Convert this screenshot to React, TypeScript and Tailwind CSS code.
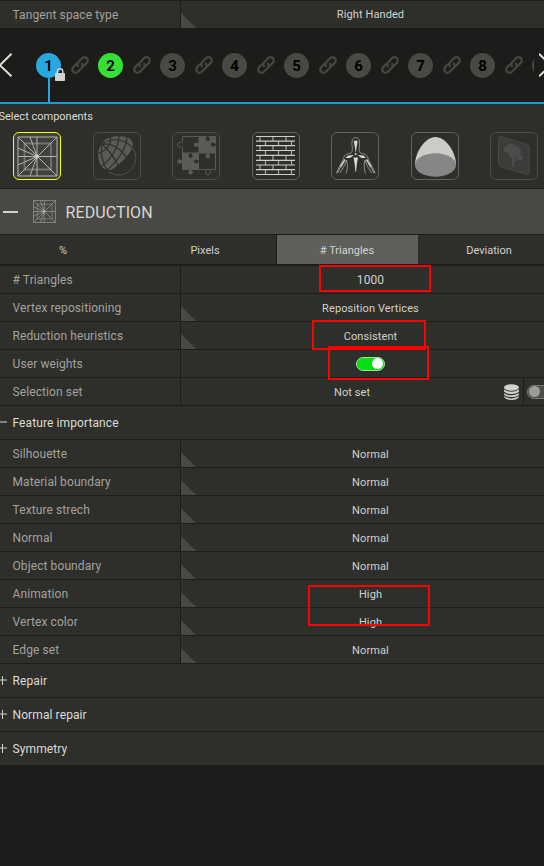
import React from "react";

const LABEL = "text-[12px] tracking-[0.1px]";
const VALUE = "text-[11px] tracking-[0.1px] text-[#d2d2ce]";

function Corner() {
  return (
    <svg className="block h-[15px] w-[15px] self-end" viewBox="0 0 15 15">
      <path d="M0 0 15 15H0Z" fill="#484944" />
    </svg>
  );
}

function Row({ label, menu = true, children }: { label: string; menu?: boolean; children: React.ReactNode }) {
  return (
    <div className="flex h-7 w-[560px] border-b border-[#1d1d1b]">
      <div className={`w-[181px] shrink-0 border-r border-[#1d1d1b] pl-[12.5px] leading-[29px] text-[#a3a39e] ${LABEL}`}>
        {label}
      </div>
      <div className="grid flex-1 grid-cols-1 grid-rows-[27px]">
        <div className="col-start-1 row-start-1 flex">{menu && <Corner />}</div>
        <div className={`col-start-1 row-start-1 flex items-center justify-center ${VALUE}`}>{children}</div>
      </div>
    </div>
  );
}

function Text({ children }: { children: React.ReactNode }) {
  return <span className="pt-[3px] leading-4">{children}</span>;
}

function Section({ label, open = false }: { label: string; open?: boolean }) {
  return (
    <div className="flex h-[34px] items-center border-b border-[#1d1d1b] text-[#dcdcd8]">
      <svg className="h-[11px] w-[12.5px] shrink-0" viewBox="0 0 12.5 11">
        <path d={open ? "M0 5H7" : "M0 5H7M2.5 1V10"} stroke="#d2d2ce" strokeWidth="1" />
      </svg>
      <span className={LABEL}>{label}</span>
    </div>
  );
}

function MeshIcon({ className, thin = 1, line = "#b4b4af" }: { className: string; thin?: number; line?: string }) {
  return (
    <svg className={className} viewBox="4 3 41 41" fill="none">
      <path d="M11.5 10.5H38V36.5H11.5Z" stroke="#73746f" strokeWidth="1.8" />
      <path
        d="M5 4H44V43H5ZM5 4 44 43M44 4 5 43M24 4V43M5 23.5H44M24 23.5 17 4M24 23.5 17 43M24 23.5 5 15M24 23.5 5 32"
        stroke={line}
        strokeWidth={thin}
      />
      <circle cx="24" cy="23.5" r="2" fill="#c9c9c5" />
    </svg>
  );
}

function SphereIcon() {
  return (
    <svg className="size-12 shrink-0" viewBox="0 0 48 48" fill="none">
      <path d="M39.500 15.500A17.300 17.300 0 0 1 16 40.200" stroke="#50514c" />
      <path
        d="M5 22C5 17 9 9 15 6 20 3.800 30 3.600 35 5.500 40 8 41 13 38 18.500 34 25 26 33 20 37 12 41 5 34 5 22Z"
        fill="#5a5b56"
      />
      <path
        d="M9 12Q26 2 39.500 15.500M9 12Q24 11 33.500 25.500M9 12Q18 20 25.500 34M9 12Q6 26 15 40M17 4Q20 16 4 22M26 3Q25 22 8.500 34M34 4Q33 22 13 39"
        stroke="#2e2e2b"
        strokeWidth="1.2"
      />
    </svg>
  );
}

function PuzzleIcon() {
  return (
    <svg className="size-12 shrink-0" viewBox="0 0 48 48" fill="none">
      <path
        d="M10.500 10.500V4.500H27V21H10.500V15M27 37.500H43.500V21H27M27 37.500H34.500M9.800 11.200A2.400 2.400 0 1 0 9.800 14.200M34.500 38.500A2.400 2.400 0 1 0 37.500 38.500"
        stroke="#5a5b56"
      />
      <path d="M27 4H44V21H27ZM10 21H27V38H10Z" fill="#5a5b56" />
      <g fill="#5a5b56">
        <circle cx="24.200" cy="12.700" r="2.300" />
        <path d="M24 11.700H28V13.700H24ZM8 28.500H11V30.500H8ZM17.600 37H19.600V40H17.600ZM34.700 20H36.700V24H34.700Z" />
        <circle cx="35.700" cy="24" r="2.300" />
        <circle cx="7.500" cy="29.500" r="2.300" />
        <circle cx="18.600" cy="40.500" r="2.300" />
      </g>
      <g fill="#2e2e2b">
        <circle cx="35.700" cy="7" r="2.100" />
        <circle cx="41" cy="12.700" r="2.100" />
        <circle cx="18.600" cy="23.800" r="2.100" />
        <circle cx="24.200" cy="29.500" r="2.100" />
        <path d="M34.900 4H36.500V7H34.900ZM41 12H44V13.500H41ZM17.800 21H19.400V24H17.800ZM24 28.700H27V30.300H24Z" />
      </g>
    </svg>
  );
}

function BrickIcon() {
  return (
    <svg className="size-12 shrink-0" viewBox="0 0 48 48" fill="none">
      <path
        d="M8 4V9M21 4V9M34 4V9M8 14V18M21 14V18M34 14V18M8 23V28M21 23V28M34 23V28M8 33V38M21 33V38M34 33V38M13.500 9V14M26.500 9V14M39.500 9V14M13.500 18V23M26.500 18V23M39.500 18V23M13.500 28V33M26.500 28V33M39.500 28V33M13.500 38V42M26.500 38V42M39.500 38V42"
        stroke="#a5a6a0"
        strokeWidth="1.200"
      />
      <path
        d="M4 4.500H43M4 9.200H43M4 13.700H43M4 18.500H43M4 23.400H43M4 28.400H43M4 33H43M4 37.700H43M4 42.500H43"
        stroke="#cdcec7"
        strokeWidth="1.200"
      />
    </svg>
  );
}

function SkeletonIcon() {
  return (
    <svg className="size-12 shrink-0" viewBox="0 0 48 48" fill="none">
      <path
        d="M5.500 41.500C7 36 10 32 12 28 13 23 15 22 19 21.500 21 21 21.500 19 21.300 15 20.500 13 21 9 21.500 7.500 23 5 26.500 5 28 7.500 28.500 9 29 13 28.200 15 28 19 28.500 21 30.500 21.500 34.500 22 36.500 23 37.500 28 39.500 32 42.500 36 44 41.500M15 41.500C17 36 16.500 32 15.500 28M34.500 41.500C32.500 36 33 32 34 28M9 41C11 37 14 34 15.500 28M40.500 41C38.500 37 35.500 34 34 28"
        stroke="#a3a49e"
        strokeWidth=".8"
      />
      <path
        d="M22.800 9.500Q24.800 7.500 26.700 9.500L25.500 16 25 20H24.500L24 16ZM14.500 26 17 23.500 23 23 19 26ZM35 26 32.500 23.500 26.500 23 30.500 26ZM22.500 25.500H27L26 31 25 40H24.500L23.500 31Z"
        fill="#d7d8d2"
      />
      <path d="M14 27.500 9.500 35M35.500 27.500 40 35" stroke="#d0d1cb" strokeWidth="1.500" />
      <path d="M10 34 6.500 41M39.500 34 43 41" stroke="#c0c1bb" strokeWidth=".8" />
      <circle cx="24.700" cy="22" r="1" fill="#d7d8d2" />
    </svg>
  );
}

function DomeIcon() {
  return (
    <svg className="size-12 shrink-0" viewBox="0 0 48 48">
      <path d="M4 33C4 20 14 5 24.500 5S45 20 45 33Z" fill="#cbccc5" />
      <ellipse cx="24.500" cy="33" rx="20.500" ry="11.700" fill="#868686" />
    </svg>
  );
}

function BillboardIcon() {
  return (
    <svg className="size-12 shrink-0" viewBox="0 0 48 48">
      <path
        d="M11 4.700 37 12.500Q39.300 13.500 39.300 16V40Q39 43 36.500 42.500L10.500 34.500Q8.500 33.500 8.500 31V7Q8.500 4 11 4.700Z"
        fill="#3b3b3a"
        stroke="#484946"
      />
      <g fill="#4c4d4b">
        <circle cx="20.500" cy="16.500" r="5" />
        <circle cx="26" cy="19" r="5" />
        <circle cx="17" cy="17.500" r="3.300" />
        <circle cx="23" cy="22" r="4" />
        <circle cx="30" cy="25.500" r="2.800" />
        <path d="M22 24H24V28L29 25 29.500 26.500 24 30V35L22 34Z" />
      </g>
    </svg>
  );
}

const components = [
  { key: "reduction", icon: <MeshIcon className="size-[41px] shrink-0" />, box: "border-[#ffff0a] bg-[#40403e]" },
  { key: "sphere", icon: <SphereIcon />, box: "border-[#4a4b47]" },
  { key: "puzzle", icon: <PuzzleIcon />, box: "border-[#4a4b47]" },
  { key: "brick", icon: <BrickIcon />, box: "border-[#62635e]" },
  { key: "bones", icon: <SkeletonIcon />, box: "border-[#62635e]" },
  { key: "dome", icon: <DomeIcon />, box: "border-[#62635e]" },
  { key: "billboard", icon: <BillboardIcon />, box: "border-[#4a4b47]" },
];

function ChainIcon() {
  return (
    <svg className="ml-[8.500px] size-5 shrink-0" viewBox="-10 -10 20 20" fill="none" stroke="#454641" strokeWidth="2.3" strokeLinecap="round">
      <g transform="rotate(-45)">
        <path d="M-1.800 -3.300H-6.300A3.300 3.300 0 0 0 -6.300 3.300H-1A3.300 3.300 0 0 0 2.300 .6" />
        <path d="M1.800 3.300H6.300A3.300 3.300 0 0 0 6.300 -3.300H1A3.300 3.300 0 0 0 -2.300 -.6" />
      </g>
    </svg>
  );
}

function Steps() {
  return (
    <div className="relative flex h-[74px] items-center overflow-hidden bg-[#1c1c1b]">
      <svg className="h-6 w-9 shrink-0" viewBox="0 0 36 24">
        <path d="M11.500 .8 -.2 12.300 11.500 23.300" stroke="#dededb" strokeWidth="2" fill="none" />
      </svg>
      <div className="flex w-[498px] shrink-0 items-center overflow-hidden">
        {[1, 2, 3, 4, 5, 6, 7, 8].map((n) => (
          <div key={n} className="flex w-[62px] shrink-0 items-center">
            <span
              className={`flex size-[25px] items-center justify-center rounded-full pt-[2px] text-[15px] font-bold text-black ${
                n === 1 ? "bg-[#29a7df]" : n === 2 ? "bg-[#36df36]" : "bg-[#484944]"
              }`}
            >
              {n}
            </span>
            <ChainIcon />
          </div>
        ))}
        <span className="size-[25px] shrink-0 rounded-full bg-[#484944]" />
      </div>
      <svg className="ml-[5px] h-6 w-3 shrink-0" viewBox="0 0 12 24">
        <path d="M0 .8 11.700 12.300 0 23.300" stroke="#dededb" strokeWidth="2" fill="none" />
      </svg>
      <div className="absolute left-12 top-[50px] h-[24px] w-[2px] bg-[#29a7df]" />
      <svg className="absolute left-[55px] top-[40px] h-[13px] w-[10px]" viewBox="0 0 10 13">
        <path d="M2.200 6V3.500Q2.200 .8 5 .8T7.800 3.500V6" stroke="#d2d2ce" strokeWidth="1.400" fill="none" />
        <rect y="5" width="10" height="8" rx=".7" fill="#d2d2ce" />
      </svg>
    </div>
  );
}

function DatabaseIcon() {
  return (
    <svg className="mr-1 h-4 w-[15px]" viewBox="0 0 15 16" fill="#d0d0cc">
      <ellipse cx="7.500" cy="3.500" rx="7.500" ry="3.300" />
      <path d="M0 5.500Q7.500 10 15 5.500V7.500Q13 10 7.500 10T0 7.500ZM0 9.200Q7.500 13.500 15 9.200V10.700Q13 13 7.500 13T0 10.700ZM0 12.300Q7.500 16.500 15 12.300V13Q13 16 7.500 16T0 13Z" />
    </svg>
  );
}

export default function App() {
  return (
    <div className="relative h-[866px] w-[544px] overflow-hidden bg-[#1c1c1b] font-['Roboto',sans-serif]">
      <div className="bg-[#2e2e2b] pt-px shadow-[inset_0_1px_0_#1d1d1b]">
        <Row label="Tangent space type">
          <span className="pt-[2px]">Right Handed</span>
        </Row>
      </div>
      <div className="-mt-px">
        <Steps />
      </div>
      <div className="bg-[#2e2e2b]">
        <div className="h-[86px] border-t-2 border-[#1d9ad0]">
          <div className="-ml-[1.500px] h-[28px] text-[11px] leading-[25px] text-[#dcdcd8]">Select components</div>
          <div className="grid grid-cols-[80px_79px_80px_79px_80px_79px_48px] pl-[13px]">
            {components.map((c) => (
              <div key={c.key} className={`flex size-12 items-center justify-center rounded-[6px] border ${c.box}`}>
                {c.icon}
              </div>
            ))}
          </div>
        </div>
        <div className="flex h-[47px] items-center border-y border-[#1d1d1b] bg-[#484944]">
          <div className="ml-[3px] h-0.5 w-[15px] bg-[#d2d2ce]" />
          <MeshIcon className="ml-[15px] size-[23px]" thin={1.2} line="#a0a09b" />
          <div className="ml-[9.500px] pt-[2px] text-[16px] leading-none tracking-[0.1px] text-[#d6d6d2]">REDUCTION</div>
        </div>
        <div className="-ml-2 flex h-[31px] w-[568px] border-b-2 border-[#1d1d1b] text-[11px] text-[#d2d2ce]">
          {["%", "Pixels", "# Triangles", "Deviation"].map((tab, i) => (
            <div
              key={tab}
              className={`flex items-center justify-center pt-[3px] ${
                i === 1 ? "w-[143px] border-r border-[#1d1d1b]" : i === 2 ? "w-[141px] bg-[#5f605b] pr-px" : "w-[142px]"
              }`}
            >
              {tab}
            </div>
          ))}
        </div>
        <Row label="# Triangles" menu={false}>
          <span className="pt-px text-[12px] tracking-[0.1px]">1000</span>
        </Row>
        <Row label="Vertex repositioning">
          <Text>Reposition Vertices</Text>
        </Row>
        <Row label="Reduction heuristics">
          <Text>Consistent</Text>
        </Row>
        <Row label="User weights" menu={false}>
          <span className="flex h-[14px] w-[29px] items-center justify-end rounded-full border border-[#a5dba3] bg-[#00df10] pr-px">
            <span className="size-[11px] rounded-full bg-white" />
          </span>
        </Row>
        <Row label="Selection set" menu={false}>
          <span className="ml-[129px] flex-1 pl-[24px] pt-[3px] leading-4">Not set</span>
          <DatabaseIcon />
          <span className="flex h-full w-[37px] items-center border-l border-[#1d1d1b] pl-[3px]">
            <span className="flex h-[14px] w-[29px] items-center rounded-full border border-[#777874] bg-[#4d4e4a] pl-px">
              <span className="size-[11px] rounded-full bg-[#9b9b98]" />
            </span>
          </span>
        </Row>
        <Section label="Feature importance" open />
        {["Silhouette", "Material boundary", "Texture strech", "Normal", "Object boundary"].map((l) => (
          <Row key={l} label={l}>
            <Text>Normal</Text>
          </Row>
        ))}
        <Row label="Animation">
          <Text>High</Text>
        </Row>
        <Row label="Vertex color">
          <Text>High</Text>
        </Row>
        <Row label="Edge set">
          <Text>Normal</Text>
        </Row>
        <Section label="Repair" />
        <Section label="Normal repair" />
        <Section label="Symmetry" />
      </div>
      <div className="absolute left-[319px] top-[265px] h-[27px] w-[112px] border-2 border-[#ff0000]" />
      <div className="absolute left-[312px] top-[320px] h-[30px] w-[114px] border-2 border-[#ff0000]" />
      <div className="absolute left-[328px] top-[346px] h-[34px] w-[101px] border-2 border-[#ff0000]" />
      <div className="absolute left-[308px] top-[585px] h-[41px] w-[122px] border-2 border-[#ff0000]" />
    </div>
  );
}
